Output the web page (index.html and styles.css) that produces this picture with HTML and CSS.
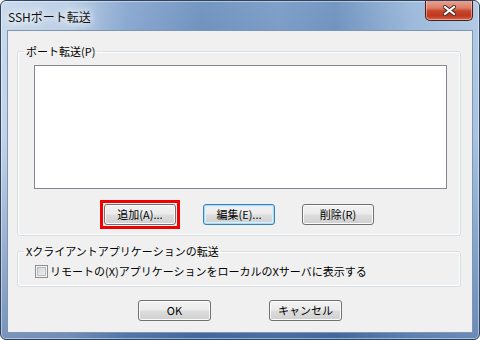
FILE: index.html
```html
<!DOCTYPE html>
<html>
    <head>
        <title>SSHポート転送</title>
        <link rel="stylesheet" href="styles.css">
    </head>
    <body>
        <div class="window">
            <div class="titlebar">
                <span class="title">SSHポート転送</span>
                <div class="close">
                    <svg width="13" height="11" viewBox="0 0 13 11">
                        <path d="M2 2 L11 9 M11 2 L2 9" stroke="#3d2320" stroke-width="4" stroke-linecap="square"/>
                        <path d="M2 2 L11 9 M11 2 L2 9" stroke="#ffffff" stroke-width="2.2" stroke-linecap="square"/>
                    </svg>
                </div>
            </div>
            <div class="client">
                <fieldset class="group forward">
                    <legend>ポート転送(P)</legend>
                    <div class="listbox"></div>
                    <div class="row">
                        <div class="button marked">追加(A)...</div>
                        <div class="button default">編集(E)...</div>
                        <div class="button">削除(R)</div>
                    </div>
                </fieldset>
                <fieldset class="group xforward">
                    <legend>Xクライアントアプリケーションの転送</legend>
                    <label class="check">
                        <span class="box"></span>
                        <span>リモートの(X)アプリケーションをローカルのXサーバに表示する</span>
                    </label>
                </fieldset>
                <div class="actions">
                    <div class="button wide">OK</div>
                    <div class="button wide">キャンセル</div>
                </div>
            </div>
        </div>
    </body>
</html>
```

FILE: styles.css
```css
body {
    margin: 0;
    font-family: "Noto Sans CJK JP", sans-serif;
    font-size: 11px;
    color: #000;
    background: #fff;
}
.window {
    box-sizing: border-box;
    width: 480px;
    height: 340px;
    display: flex;
    flex-direction: column;
    border: 1px solid #2e4360;
    border-radius: 6px;
    background:
        linear-gradient(180deg, rgba(255,255,255,0.15) 0%, rgba(255,255,255,0) 40%, rgba(30,70,130,0.45) 100%),
        linear-gradient(90deg, #c2d4e9 0%, #b2c8e2 14%, #7c9ecb 26%, #5d85b6 42%, #6a90bf 58%, #5e86b7 70%, #8fb0d6 86%, #a9c3e0 100%);
    box-shadow: inset 0 0 0 1px rgba(255,255,255,0.45);
    overflow: hidden;
}
.titlebar {
    height: 29px;
    display: flex;
    justify-content: space-between;
    align-items: flex-start;
}
.title {
    margin: 8px 0 0 7px;
    font-size: 12px;
    line-height: 16px;
    color: #111;
    text-shadow: 0 0 6px #fff, 0 0 10px #fff, 0 0 14px #e8f0f8;
}
.close {
    box-sizing: border-box;
    width: 48px;
    height: 21px;
    margin: -1px 6px 0 0;
    display: flex;
    align-items: center;
    justify-content: center;
    border: 1px solid #4a1d16;
    border-top: none;
    border-radius: 0 0 5px 5px;
    background: linear-gradient(180deg, #e9a896 0%, #dc7d67 40%, #c7452b 55%, #c0381f 80%, #d36a4c 100%);
    box-shadow: inset 0 0 0 1px rgba(255,220,210,0.5);
}
.client {
    flex: 1;
    margin: 0 6px 6px;
    border: 1px solid #7f95b1;
    background: #f0f0f0;
    display: flex;
    flex-direction: column;
}
.group {
    margin: 0 11px 0 9px;
    padding: 0;
    border: 1px solid #d5dfe5;
    border-radius: 3px;
    box-shadow: inset 0 0 0 1px #fff;
    min-width: 0;
}
.group legend {
    margin-left: 6px;
    padding: 0 2px;
    line-height: 14px;
}
.forward {
    margin-top: 13px;
}
.listbox {
    height: 122px;
    margin: 7px 13px 0 16px;
    border: 1px solid #828790;
    background: #fff;
}
.row {
    display: flex;
    gap: 27px;
    margin: 15px 0 10px;
    padding-left: 86px;
}
.button {
    box-sizing: border-box;
    width: 72px;
    height: 21px;
    line-height: 19px;
    text-align: center;
    border: 1px solid #707070;
    border-radius: 3px;
    background: linear-gradient(180deg, #f2f2f2 0%, #ebebeb 48%, #dddddd 52%, #cfcfcf 100%);
    box-shadow: inset 0 0 0 1px #fbfbfb;
}
.button.default {
    border-color: #3c7fb1;
    box-shadow: inset 0 0 0 1px #a6dcf7, inset 0 0 0 2px #d9f0fb;
}
.button.marked {
    position: relative;
}
.button.marked::after {
    content: "";
    position: absolute;
    inset: -5px;
    border: 3px solid #f00000;
}
.xforward {
    margin-top: 8px;
}
.check {
    display: flex;
    align-items: center;
    gap: 2px;
    line-height: 15px;
    margin: 6px 10px 7px 17px;
}
.box {
    box-sizing: border-box;
    width: 13px;
    height: 13px;
    border: 1px solid #8e8f8f;
    background: linear-gradient(135deg, #cbcfd5 0%, #e4e6e8 60%, #f4f4f4 100%);
    box-shadow: inset 0 0 0 1px #f4f4f4, inset 0 0 0 2px #b9bcc0;
}
.actions {
    display: flex;
    justify-content: center;
    gap: 58px;
    margin-top: 13px;
}
.button.wide {
    width: 73px;
}
```
